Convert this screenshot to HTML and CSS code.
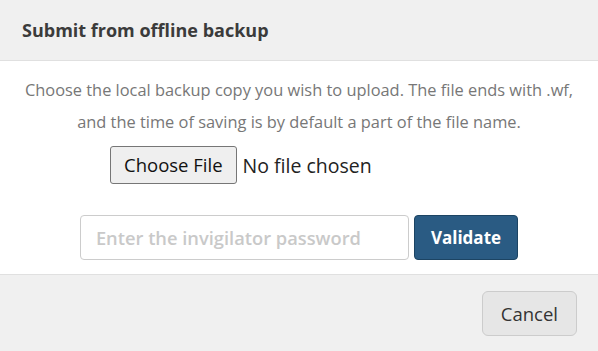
FILE: index.html
```html
<!DOCTYPE html>
<html lang="en">
<head>
    <meta charset="UTF-8">
    <meta name="viewport" content="width=device-width, initial-scale=1.0">
    <title>Submit from offline backup</title>
    <link rel="stylesheet" href="styles.css">
</head>
<body>
    <div class="modal">
        <div class="modal-header">
            <h2>Submit from offline backup</h2>
        </div>

        <div class="modal-body">
            <p class="hint">Choose the local backup copy you wish to upload. The file ends with .wf,<br>and the time of saving is by default a part of the file name.</p>

            <label class="file-picker">
                <span class="file-button">Choose File</span>
                <span class="file-name">No file chosen</span>
                <input type="file" accept=".wf" hidden>
            </label>

            <form class="password-row">
                <input type="password" class="password-input" placeholder="Enter the invigilator password">
                <button type="submit" class="btn-validate">Validate</button>
            </form>
        </div>

        <div class="modal-footer">
            <button type="button" class="btn-cancel">Cancel</button>
        </div>
    </div>
</body>
</html>
```

FILE: styles.css
```css
body {
    margin: 0;
    font-family: "Open Sans", "Noto Sans", sans-serif;
    background-color: #fff;
    color: #333;
}
.modal {
    width: 598px;
    height: 351px;
    display: flex;
    flex-direction: column;
    background-color: #fff;
}
.modal-header {
    height: 60px;
    padding: 0 22px;
    display: flex;
    align-items: center;
    background-color: #f0f0f0;
    border-bottom: 1px solid #e0e0e0;
}
.modal-header h2 {
    margin: 0;
    font-size: 18px;
    font-weight: 700;
    color: #3b3b3b;
}
.modal-body {
    flex: 1;
    padding: 13px 10px 0;
    text-align: center;
}
.hint {
    margin: 0;
    font-size: 16.4px;
    line-height: 32px;
    color: #777;
}
.file-picker {
    display: inline-flex;
    align-items: center;
    gap: 6px;
    width: 378px;
    margin-top: 8px;
    text-align: left;
    cursor: pointer;
}
.file-button {
    display: inline-block;
    height: 36px;
    line-height: 36px;
    padding: 0 13px;
    font-size: 18.5px;
    color: #111;
    background-color: #efefef;
    border: 1px solid #767676;
    border-radius: 3px;
}
.file-name {
    font-size: 19.5px;
    color: #222;
}
.password-row {
    display: flex;
    justify-content: center;
    gap: 5px;
    margin-top: 31px;
}
.password-input {
    width: 329px;
    height: 45px;
    box-sizing: border-box;
    padding: 0 15px;
    font-family: inherit;
    font-size: 18.3px;
    border: 1px solid #ccc;
    border-radius: 4px;
    outline: none;
}
.password-input::placeholder {
    color: #c9c9c9;
    font-weight: 600;
}
.btn-validate {
    height: 45px;
    padding: 0 16px;
    font-family: inherit;
    font-size: 17px;
    font-weight: 700;
    color: #fff;
    background-color: #2a5b83;
    border: 1px solid #1c4463;
    border-radius: 4px;
    cursor: pointer;
}
.modal-footer {
    height: 76px;
    padding: 0 21px;
    display: flex;
    align-items: center;
    justify-content: flex-end;
    background-color: #f0f0f0;
    border-top: 1px solid #e0e0e0;
}
.btn-cancel {
    height: 45px;
    padding: 0 18px;
    font-family: inherit;
    font-size: 18.5px;
    color: #333;
    background-color: #e6e6e6;
    border: 1px solid #ccc;
    border-radius: 6px;
    cursor: pointer;
}
```
